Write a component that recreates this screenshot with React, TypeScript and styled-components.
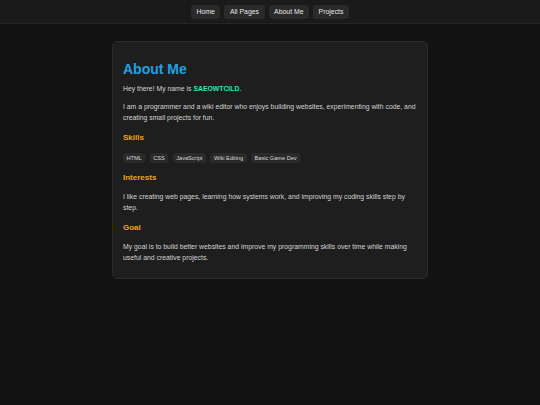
import React from 'react'
import styled, { createGlobalStyle } from 'styled-components'

const Global = createGlobalStyle`
    html, body {
        margin: 0;
        padding: 0;
        background: #121212;
        font-family: "Liberation Sans", Arial, sans-serif;
        color: #d4d4d4;
    }
`

const Page = styled.div`
    min-height: 405px;
    background: #121212;
`

const Header = styled.header`
    height: 24px;
    background: #1a1a1a;
    border-bottom: 1px solid #262626;
    display: flex;
    justify-content: center;
    align-items: center;
    gap: 4px;
    box-sizing: border-box;
`

const NavButton = styled.a`
    height: 14px;
    padding: 0 5.5px;
    border-radius: 3px;
    background: #2a2a2a;
    color: #e6e6e6;
    font-size: 6.9px;
    display: flex;
    align-items: center;
    text-decoration: none;
`

const Main = styled.main`
    display: flex;
    justify-content: center;
    padding-top: 17px;
`

const Card = styled.section`
    width: 316px;
    box-sizing: border-box;
    background: #1e1e1e;
    border: 1px solid #2a2a2a;
    border-radius: 5px;
    padding: 19px 10px 15px;
`

const Title = styled.h1`
    margin: 0 0 5px;
    font-size: 14px;
    line-height: 17px;
    color: #1fa2e0;
`

const Text = styled.p`
    margin: 0 0 7px;
    font-size: 6.85px;
    line-height: 11px;
    color: #d4d4d4;

    &:last-child {
        margin-bottom: 0;
    }
`

const Name = styled.strong`
    color: #2ee6b8;
`

const Heading = styled.h2`
    margin: 10px 0 8px;
    font-size: 8px;
    line-height: 10px;
    color: #f2a516;
`

const Tags = styled.div`
    display: flex;
    gap: 4.5px;
    margin-top: 10px;
`

const Tag = styled.span`
    height: 10px;
    padding: 0 3.5px;
    border-radius: 3px;
    background: #2a2a2a;
    color: #d8d8d8;
    font-size: 5.6px;
    display: flex;
    align-items: center;
`

const skills = ['HTML', 'CSS', 'JavaScript', 'Wiki Editing', 'Basic Game Dev']

export default function App() {
    return (
        <Page>
            <Global />
            <Header>
                <NavButton>Home</NavButton>
                <NavButton>All Pages</NavButton>
                <NavButton>About Me</NavButton>
                <NavButton>Projects</NavButton>
            </Header>
            <Main>
                <Card>
                    <Title>About Me</Title>
                    <Text>
                        Hey there! My name is <Name>SAEOWTCILD</Name>.
                    </Text>
                    <Text>
                        I am a programmer and a wiki editor who enjoys building websites, experimenting with code, and
                        creating small projects for fun.
                    </Text>
                    <Heading>Skills</Heading>
                    <Tags>
                        {skills.map(s => (
                            <Tag key={s}>{s}</Tag>
                        ))}
                    </Tags>
                    <Heading>Interests</Heading>
                    <Text>
                        I like creating web pages, learning how systems work, and improving my coding skills step by
                        step.
                    </Text>
                    <Heading>Goal</Heading>
                    <Text>
                        My goal is to build better websites and improve my programming skills over time while making
                        useful and creative projects.
                    </Text>
                </Card>
            </Main>
        </Page>
    )
}
